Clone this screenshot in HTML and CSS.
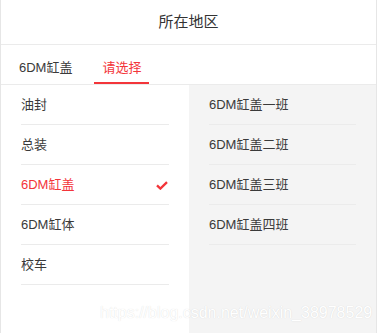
FILE: index.html
```html
<!DOCTYPE html>
<html lang="zh">
<head>
<meta charset="utf-8">
<link rel="stylesheet" href="styles.css">
</head>
<body>
<div class="panel">
  <div class="title">所在地区</div>
  <div class="tabs">
    <div class="tab">6DM缸盖</div>
    <div class="tab active">请选择</div>
  </div>
  <div class="lists">
    <ul class="col left">
      <li class="item">油封</li>
      <li class="item">总装</li>
      <li class="item selected"><span>6DM缸盖</span>
        <svg class="check" width="12" height="9" viewBox="0 0 12 9"><path d="M1 4.3 L4.4 7.6 L11 1.2" fill="none" stroke="#f3353a" stroke-width="2.3"/></svg>
      </li>
      <li class="item">6DM缸体</li>
      <li class="item">校车</li>
    </ul>
    <ul class="col right">
      <li class="item">6DM缸盖一班</li>
      <li class="item">6DM缸盖二班</li>
      <li class="item">6DM缸盖三班</li>
      <li class="item">6DM缸盖四班</li>
    </ul>
  </div>
  <div class="watermark">https://blog.csdn.net/weixin_38978529</div>
</div>
</body>
</html>
```
FILE: styles.css
```css
* { box-sizing: border-box; }
html, body { margin: 0; padding: 0; background: #fff; }
body {
  font-family: "Liberation Sans", "Noto Sans CJK SC", sans-serif;
  color: #3a3a3a;
}
.panel {
  position: relative;
  width: 377px;
  height: 333px;
  border-left: 1px solid #e6e6e6;
  border-right: 1px solid #e6e6e6;
  display: flex;
  flex-direction: column;
  overflow: hidden;
}
.title {
  height: 45px;
  line-height: 44px;
  text-align: center;
  font-size: 15px;
  color: #333;
  border-bottom: 1px solid #ebebeb;
}
.tabs {
  height: 40px;
  display: flex;
  gap: 14px;
  padding: 13px 0 0 10px;
  border-bottom: 1px solid #ebebeb;
}
.tab {
  font-size: 13px;
  line-height: 20px;
  padding: 0 8px 4px;
  border-bottom: 2px solid transparent;
}
.tab.active {
  color: #f3353a;
  border-bottom-color: #f3353a;
}
.lists {
  flex: 1;
  display: flex;
}
.col {
  list-style: none;
  margin: 0;
  padding: 0;
  width: 188px;
}
.col.right {
  flex: 1;
  background: #f4f4f4;
}
.item {
  margin: 0 20px;
  height: 40px;
  line-height: 39px;
  font-size: 13px;
  border-bottom: 1px solid #ebebeb;
  display: flex;
  justify-content: space-between;
  align-items: center;
}
.item.selected { color: #f3353a; }
.check { margin-right: 1px; margin-top: 1px; }
.watermark {
  position: absolute;
  left: 99px;
  top: 304px;
  font-size: 16px;
  font-family: "Liberation Sans", sans-serif;
  color: #fff;
  text-shadow: 0 0 1px rgba(0,0,0,0.15);
  white-space: nowrap;
}
```
